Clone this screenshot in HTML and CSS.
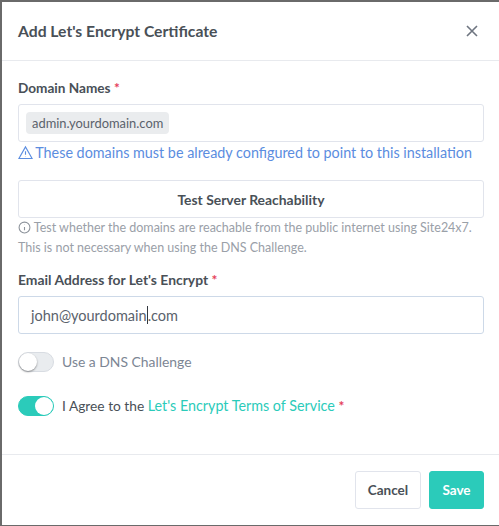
FILE: index.html
```html
<!DOCTYPE html>
<html lang="en">
<head>
    <meta charset="UTF-8">
    <title>Add Let's Encrypt Certificate</title>
    <link rel="stylesheet" href="styles.css">
</head>
<body>
    <div class="modal">
        <div class="modal-header">
            <h5 class="modal-title">Add Let's Encrypt Certificate</h5>
            <svg class="close-icon" width="16" height="16" viewBox="0 0 16 16"><path d="M3 3l10 10M13 3L3 13"/></svg>
        </div>
        <div class="modal-body">
            <label class="form-label label-domain">Domain Names <span class="req">*</span></label>
            <div class="form-control tags"><span class="tag">admin.yourdomain.com</span></div>
            <div class="hint hint-blue">
                <svg class="hint-icon" width="15" height="15" viewBox="0 0 24 24"><path d="M12 3L1.5 21.5h21L12 3zM12 10v5.5M12 18.2v.5"/></svg>
                These domains must be already configured to point to this installation
            </div>

            <button class="btn btn-test">Test Server Reachability</button>
            <div class="hint hint-muted">
                <svg class="info-icon" width="13" height="13" viewBox="0 0 24 24"><circle cx="12" cy="12" r="10"/><path d="M12 11v6M12 7v.5"/></svg>
                Test whether the domains are reachable from the public internet using Site24x7. This is not necessary when using the DNS Challenge.
            </div>

            <label class="form-label label-email">Email Address for Let's Encrypt <span class="req">*</span></label>
            <div class="form-control email">john@yourdomain<span class="caret"></span>.com</div>

            <div class="switch-row row-dns">
                <span class="switch"></span>
                <span class="switch-text muted">Use a DNS Challenge</span>
            </div>
            <div class="switch-row row-agree">
                <span class="switch on"></span>
                <span class="switch-text">I Agree to the <a class="link">Let's Encrypt Terms of Service</a> <span class="req">*</span></span>
            </div>
        </div>
        <div class="modal-footer">
            <button class="btn btn-cancel">Cancel</button>
            <button class="btn btn-save">Save</button>
        </div>
    </div>
</body>
</html>
```

FILE: styles.css
```css
html, body { height: 100%; }
body {
    margin: 0;
    background: #6a6a6a;
    font-family: "Lato", "Noto Sans", sans-serif;
    font-size: 14px;
    color: #495057;
    overflow: hidden;
}
.modal {
    box-sizing: border-box;
    height: 523px;
    margin: 2px 0 0 2px;
    background: #fff;
    display: flex;
    flex-direction: column;
}
.modal-header {
    height: 59px;
    box-sizing: border-box;
    padding: 0 19px 0 16px;
    display: flex;
    align-items: center;
    justify-content: space-between;
    border-bottom: 1px solid #e8eaee;
    flex: none;
}
.modal-title {
    margin: 0;
    font-size: 15.7px;
    font-weight: 700;
    color: #495057;
}
.close-icon { fill: none; stroke: #6e7580; stroke-width: 1.6; }
.modal-body {
    padding: 17px 15px 0 16px;
    flex: 1;
}
.form-label {
    display: block;
    font-size: 13.9px;
    font-weight: 700;
    line-height: 20px;
    margin-bottom: 6px;
}
.label-domain { font-size: 13.6px; }
.req { color: #e53e5a; font-weight: 700; }
.form-control {
    box-sizing: border-box;
    height: 38px;
    border: 1px solid #e1e4ec;
    border-radius: 3px;
    display: flex;
    align-items: center;
}
.tags { padding-left: 7px; }
.tag {
    background: #eaecee;
    color: #5a626c;
    border-radius: 4px;
    font-size: 12.9px;
    line-height: 22px;
    padding: 0 6px;
}
.hint { font-size: 14px; line-height: 20px; }
.hint-blue { color: #5b8de0; font-size: 14.35px; margin-top: 1px; white-space: nowrap; }
.hint-icon { fill: none; stroke: #5b8de0; stroke-width: 1.8; vertical-align: -2px; margin-right: -1px; }
.btn-test {
    display: block;
    width: 100%;
    height: 38px;
    margin-top: 17px;
}
.btn {
    box-sizing: border-box;
    font-family: inherit;
    font-size: 13.9px;
    font-weight: 700;
    color: #495057;
    background: #fff;
    border: 1px solid #e1e4ec;
    border-radius: 3px;
}
.hint-muted {
    color: #9aa0a8;
    font-size: 12.5px;
    margin-top: 0;
}
.info-icon { fill: none; stroke: #8d939b; stroke-width: 2; vertical-align: -2px; }
.label-email { margin-top: 12px; }
.email {
    border-color: #cdd9e8;
    padding-left: 12px;
    font-size: 14.5px;
    color: #5a626c;
}
.caret {
    display: inline-block;
    width: 1px;
    height: 18px;
    background: #33383f;
}
.switch-row { display: flex; align-items: center; gap: 8px; }
.row-dns { margin-top: 18px; }
.row-agree { margin-top: 24px; }
.switch {
    box-sizing: border-box;
    display: block;
    position: relative;
    width: 36px;
    height: 20px;
    border-radius: 10px;
    background: #e9ecef;
    border: 1px solid #d8dce2;
    flex: none;
}
.switch::after {
    content: "";
    position: absolute;
    left: 0;
    top: 0;
    width: 18px;
    height: 18px;
    border-radius: 50%;
    background: #fff;
    box-shadow: 0 1px 2px rgba(0,0,0,0.4);
}
.switch.on { background: #2bcbba; border-color: #2bcbba; }
.switch.on::after { left: 16px; box-shadow: none; }
.switch-text { font-size: 13.75px; line-height: 20px; }
.switch-text.muted { color: #7c8694; font-size: 13.9px; }
.link { color: #2bcbba; font-size: 14.33px; }
.modal-footer {
    height: 71px;
    padding: 16px 15px 0 0;
    box-sizing: border-box;
    border-top: 1px solid #e8eaee;
    display: flex;
    justify-content: flex-end;
    gap: 8px;
    flex: none;
}
.btn-cancel, .btn-save { height: 38px; font-size: 13.5px; }
.btn-cancel { width: 66px; }
.btn-save { width: 55px; background: #2bcbba; border-color: #2bcbba; color: #fff; }
```
